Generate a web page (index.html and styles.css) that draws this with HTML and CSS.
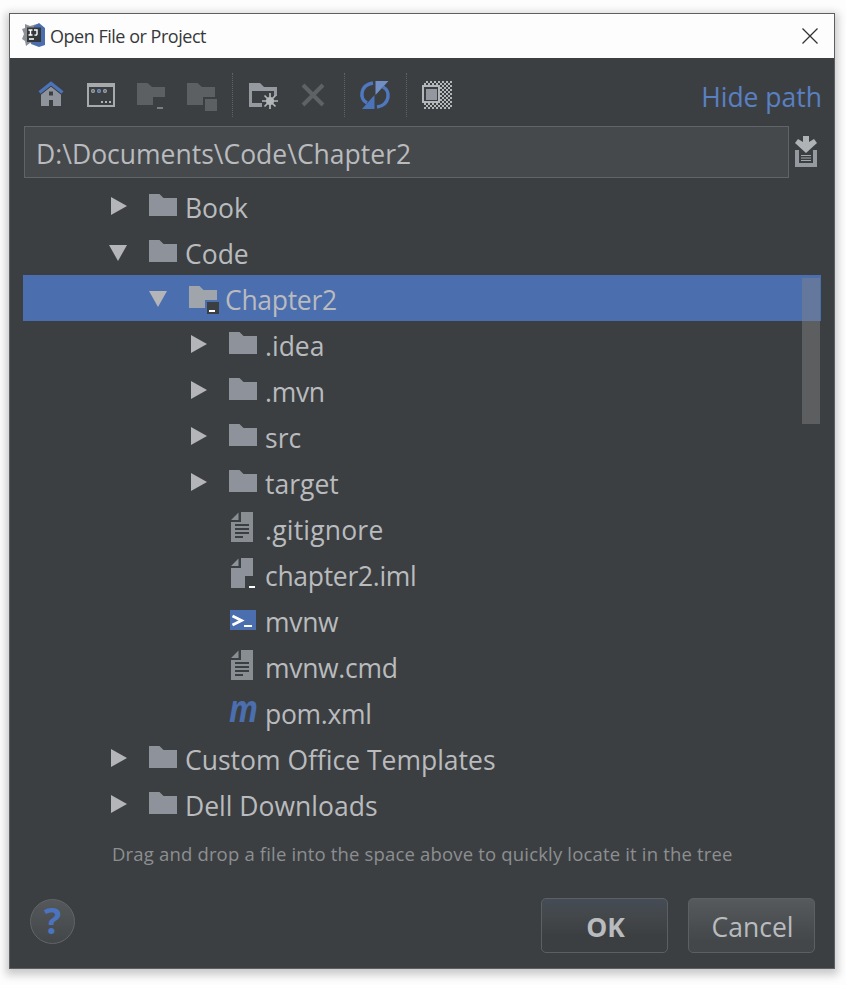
FILE: index.html
```html
<!DOCTYPE html>
<html lang="en">
<head>
<meta charset="utf-8">
<title>Open File or Project</title>
<link rel="stylesheet" href="styles.css">
</head>
<body>
<svg width="0" height="0" class="defs">
  <defs>
    <pattern id="checker" width="4" height="4" patternUnits="userSpaceOnUse"><path d="M0 0h2v2h-2zM2 2h2v2h-2z" fill="#b5b8bb"/></pattern>
    <symbol id="right" viewBox="0 0 18 46"><path d="M2 14v18l16-9z" fill="#b3b5b8"/></symbol>
    <symbol id="down" viewBox="0 0 18 46"><path d="M0 16h18l-9 16z" fill="#b3b5b8"/></symbol>
    <symbol id="folder" viewBox="0 0 28 46"><path d="M0 11h10.500l4 4H28v18H0z" fill="#8e939b"/></symbol>
    <symbol id="doc" viewBox="0 0 28 46">
      <path d="M12 7h12v30H2V17h10zM2 15l7.500-7.500V15z" fill="#898e93"/>
      <path d="M6 20h14M6 24h14M6 28h14M6 32h8" stroke="#3c3f41" stroke-width="2"/>
    </symbol>
  </defs>
</svg>
<main class="window">
  <header class="titlebar">
    <svg class="logo" width="24" height="24" viewBox="0 0 24 24">
      <path d="M3 1l5 2 7-2 2 4-2 17-7-2-4 3-1-5-3-2 2-5-2-5 3-1z" fill="#8c9096"/>
      <path d="M12 3l5-3 6 5v17l-6 2-8-3z" fill="#4b6eaf"/>
      <rect x="5" y="4.500" width="14" height="14.500" fill="#34383b"/>
      <path d="M6.500 7h4M8.500 7v5M6.500 12h4M12 7h3v4q0 1.500-2.500 1M7 16h5" stroke="#fff" stroke-width="1.400" fill="none"/>
    </svg>
    <h1 class="title">Open File or Project</h1>
    <svg class="close" width="16" height="16" viewBox="0 0 16 16"><path d="M.5.5l15 15M15.500.5l-15 15" stroke="#303336" stroke-width="1.300"/></svg>
  </header>

  <nav class="toolbar">
    <svg class="tool home" width="28" height="28" viewBox="0 0 28 28">
      <path d="M4 13.500L14 5l10 8.500V25H16v-6h-4v6H4z" fill="#8f949c"/>
      <rect x="12" y="10.500" width="4" height="4" fill="#3c3f41"/>
      <path d="M2.500 11.500L14 2.500l11.500 9" fill="none" stroke="#3c3f41" stroke-width="5"/>
      <path d="M2.500 11.500L14 2.500l11.500 9" fill="none" stroke="#4b73ba" stroke-width="3.400"/>
    </svg>
    <svg class="tool desktop" width="28" height="28" viewBox="0 0 28 28">
      <rect x="1" y="3" width="26" height="22" fill="none" stroke="#a7aaad" stroke-width="2"/>
      <path d="M0 4h28" stroke="#a7aaad" stroke-width="4"/>
      <circle cx="6" cy="10" r="1.400" class="dot"/><circle cx="12" cy="10" r="1.400" class="dot blue"/><circle cx="18" cy="10" r="1.400" class="dot"/>
      <path d="M14 21h2M18 21h2M22 21h2" stroke="#b0b3b5" stroke-width="2"/>
    </svg>
    <svg class="tool project" width="28" height="28" viewBox="0 0 28 28"><path d="M0 2h10.500l4.500 4h13v10H16v8H0z" fill="#5c6063"/><path d="M20 27h6" stroke="#7b7e80" stroke-width="2"/></svg>
    <svg class="tool module" width="30" height="30" viewBox="0 0 30 30"><path d="M0 3h10.500l4.500 4h13v10H16v8H0z" fill="#5c6063"/><rect x="18" y="19" width="12" height="12" fill="#5c6063"/></svg>
    <i class="divider first"></i>
    <svg class="tool newfolder" width="30" height="28" viewBox="0 0 30 28">
      <path d="M0 2h11l4 4h13v9h-3v-5H3v12h10v4H0z" fill="#9599a0"/>
      <path d="M21 12v16M13 20h16M15.500 14.500l11 11M26.500 14.500l-11 11" stroke="#b3b6b9" stroke-width="1.700"/><circle cx="21" cy="20" r="4" fill="#b3b6b9"/>
    </svg>
    <svg class="tool delete" width="24" height="28" viewBox="0 0 24 28"><path d="M2 4l20 20M22 4L2 24" stroke="#5e6265" stroke-width="4"/></svg>
    <i class="divider second"></i>
    <svg class="tool refresh" width="28" height="28" viewBox="0 0 28 28">
      <path d="M12 2C-1 4-2 18 6 22" fill="none" stroke="#4f78c0" stroke-width="3.500"/>
      <path d="M16 26c13-2 14-16 6-20" fill="none" stroke="#4f78c0" stroke-width="3.500"/>
      <path d="M13.500 14v14H1z" fill="#4b73ba"/><path d="M14.500 14V0h13z" fill="#708fc5"/>
    </svg>
    <i class="divider third"></i>
    <svg class="tool hidden" width="30" height="28" viewBox="0 0 30 28">
      <g shape-rendering="crispEdges"><rect x="2" width="28" height="28" fill="url(#checker)"/></g>
      <rect x="1" y="5" width="16" height="16" fill="#3c3f41" stroke="#b4b7ba" stroke-width="2"/><rect x="4" y="8" width="11" height="11" fill="#9397a0"/>
    </svg>
    <a class="hide"><span>Hide path</span></a>
  </nav>

  <div class="pathrow">
    <div class="field"><span>D:\Documents\Code\Chapter2</span></div>
    <svg width="22" height="32" viewBox="0 0 22 32">
      <path d="M0 14h4v13h14V14h4v17H0z" fill="#9599a0"/>
      <path d="M6 19.500h10M6 22h10M6 24.500h10" stroke="#a4a7aa" stroke-width="1.200"/>
      <path d="M8-1h6v7l5-3 3 4L11 17 0 7l3-4 5 3z" fill="#b0b3b6"/>
    </svg>
  </div>

  <section class="tree">
    <div class="row l0"><svg class="arrow"><use href="#right"/></svg><svg class="icon"><use href="#folder"/></svg><span>Book</span></div>
    <div class="row l0"><svg class="arrow"><use href="#down"/></svg><svg class="icon"><use href="#folder"/></svg><span>Code</span></div>
    <div class="row l1 selected"><svg class="arrow"><use href="#down"/></svg><svg class="icon" viewBox="0 0 28 46"><path d="M0 11h10.500l4 4H28v10H16v8H0z" fill="#a0a5ac"/><rect x="18" y="27" width="12" height="12" fill="#3c3f41"/><path d="M20 36h6" stroke="#fff" stroke-width="2"/></svg><span class="tight">Chapter2</span></div>
    <div class="row l2"><svg class="arrow"><use href="#right"/></svg><svg class="icon"><use href="#folder"/></svg><span>.idea</span></div>
    <div class="row l2"><svg class="arrow"><use href="#right"/></svg><svg class="icon"><use href="#folder"/></svg><span class="tight">.mvn</span></div>
    <div class="row l2"><svg class="arrow"><use href="#right"/></svg><svg class="icon"><use href="#folder"/></svg><span>src</span></div>
    <div class="row l2"><svg class="arrow"><use href="#right"/></svg><svg class="icon"><use href="#folder"/></svg><span>target</span></div>
    <div class="row l2"><i class="arrow"></i><svg class="icon"><use href="#doc"/></svg><span class="loose">.gitignore</span></div>
    <div class="row l2"><i class="arrow"></i><svg class="icon" viewBox="0 0 28 46"><path d="M12 7h12v18h-8v12H2V17h10zM2 15l7.500-7.500V15z" fill="#8e939b"/><path d="M20 36h6" stroke="#fff" stroke-width="2"/></svg><span class="tight">chapter2.iml</span></div>
    <div class="row l2"><i class="arrow"></i><svg class="icon" viewBox="0 0 28 46"><rect x="1" y="13" width="26" height="20" fill="#4b6eaf"/><path d="M3.500 19l9 4.500-9 4.500" fill="none" stroke="#fff" stroke-width="2.800"/><path d="M15 29h8" stroke="#fff" stroke-width="2"/></svg><span class="tight">mvnw</span></div>
    <div class="row l2"><i class="arrow"></i><svg class="icon"><use href="#doc"/></svg><span class="tight">mvnw.cmd</span></div>
    <div class="row l2"><i class="arrow"></i><svg class="icon" viewBox="0 0 28 46"><text x="0" y="33" class="maven" textLength="29" lengthAdjust="spacingAndGlyphs">m</text></svg><span class="tight">pom.xml</span></div>
    <div class="row l0"><svg class="arrow"><use href="#right"/></svg><svg class="icon"><use href="#folder"/></svg><span>Custom Office Templates</span></div>
    <div class="row l0"><svg class="arrow"><use href="#right"/></svg><svg class="icon"><use href="#folder"/></svg><span>Dell Downloads</span></div>
    <i class="scroll"></i>
  </section>
  <p class="hint"><span>Drag and drop a file into the space above to quickly locate it in the tree</span></p>
  <footer class="actions">
    <button class="help"><span>?</span></button>
    <button class="btn ok"><span>OK</span></button>
    <button class="btn cancel"><span>Cancel</span></button>
  </footer>
</main>
</body>
</html>
```
FILE: styles.css
```css
* { box-sizing: border-box; }
html { background: #fdfdfd; }
body { margin: 0; height: 985px; font-family: "Open Sans", "Noto Sans", sans-serif; color: #b9bbbe; overflow: hidden; }
.defs { display: block; height: 0; }
.window { width: 826px; height: 956px; margin: 13px 0 0 9px; border: 1px solid #5d6062; background: #3c3f41; box-shadow: 0 3px 8px 3px #cacaca; display: flex; flex-direction: column; }
.titlebar { height: 44px; flex: none; background: #fdfdfd; display: flex; align-items: center; padding: 0 16px 0 12px; }
.logo { flex: none; margin-top: -2px; }
.title { margin: 0 0 0 4px; font-size: 18px; font-weight: 400; letter-spacing: -0.48px; color: #36393b; flex: 1; line-height: 44px; white-space: nowrap; }
.close { flex: none; margin-top: -1px; }
.toolbar { height: 68px; flex: none; display: flex; align-items: center; padding: 6px 12px 0 27px; }
.tool { flex: none; overflow: visible; }
.desktop { margin-left: 22px; }
.project { margin-left: 22px; }
.module { margin-left: 22px; }
.newfolder { margin-left: 16px; }
.delete { margin-left: 22px; }
.refresh { margin-left: 16px; }
.hidden { margin-left: 15px; }
.dot { fill: none; stroke: #a7aaad; stroke-width: 1.2; }
.blue { stroke: #7c9bd6; }
.divider { width: 1px; height: 44px; border-left: 1px dotted #606366; flex: none; }
.first { margin-left: 15px; }
.second { margin-left: 19px; }
.third { margin-left: 17px; }
.hide { margin-left: auto; padding-top: 4px; color: #5a80c4; font-size: 26.500px; white-space: nowrap; }
.pathrow { height: 52px; flex: none; display: flex; align-items: center; gap: 6px; padding-left: 14px; }
.field { width: 765px; height: 52px; border: 1px solid #606466; background: #45494c; font-size: 26.500px; line-height: 54px; padding-left: 11px; white-space: nowrap; }
.tree { position: relative; margin: 5px 13px 0; flex: none; }
.row { height: 46px; display: flex; font-size: 26.500px; line-height: 51px; white-space: nowrap; }
.l0 { padding-left: 86px; }
.l1 { padding-left: 126px; }
.l2 { padding-left: 166px; }
.tight { letter-spacing: -0.3px; }
.loose { letter-spacing: 0.2px; }
.selected { background: #4b6eaf; }
.arrow { width: 18px; height: 46px; flex: none; }
.icon { width: 28px; height: 46px; flex: none; margin: 0 8px 0 22px; overflow: visible; }
.maven { font: italic 700 37px "Open Sans", sans-serif; fill: #4b6eaf; }
.scroll { position: absolute; right: 1px; top: 95px; width: 18px; height: 146px; background: rgba(130, 134, 136, .45); }
.hint { margin: 11px 0 0 102px; font-size: 18.500px; letter-spacing: 0.17px; line-height: 32px; color: #8c8f92; white-space: nowrap; }
.actions { display: flex; align-items: center; margin-top: 27px; padding: 0 19px 0 20px; height: 56px; }
button { font-family: inherit; color: #b9bbbe; padding: 0; }
.help { width: 45px; height: 45px; margin-top: -8px; border-radius: 50%; border: 1px solid #616568; background: linear-gradient(#54585a, #43474a); color: #4b73c0; font-size: 36px; font-weight: 700; line-height: 40px; }
.btn { width: 127px; height: 55px; border: 1px solid #5c6063; border-radius: 5px; font-size: 26.500px; line-height: 49px; padding: 4px 0 0 2px; }
.ok { margin-left: auto; margin-right: 20px; font-weight: 700; background: linear-gradient(#454c55, #43474a 35%, #3c3f41 70%); }
.cancel { background: linear-gradient(#565a5c, #43474a 80%); }
```
